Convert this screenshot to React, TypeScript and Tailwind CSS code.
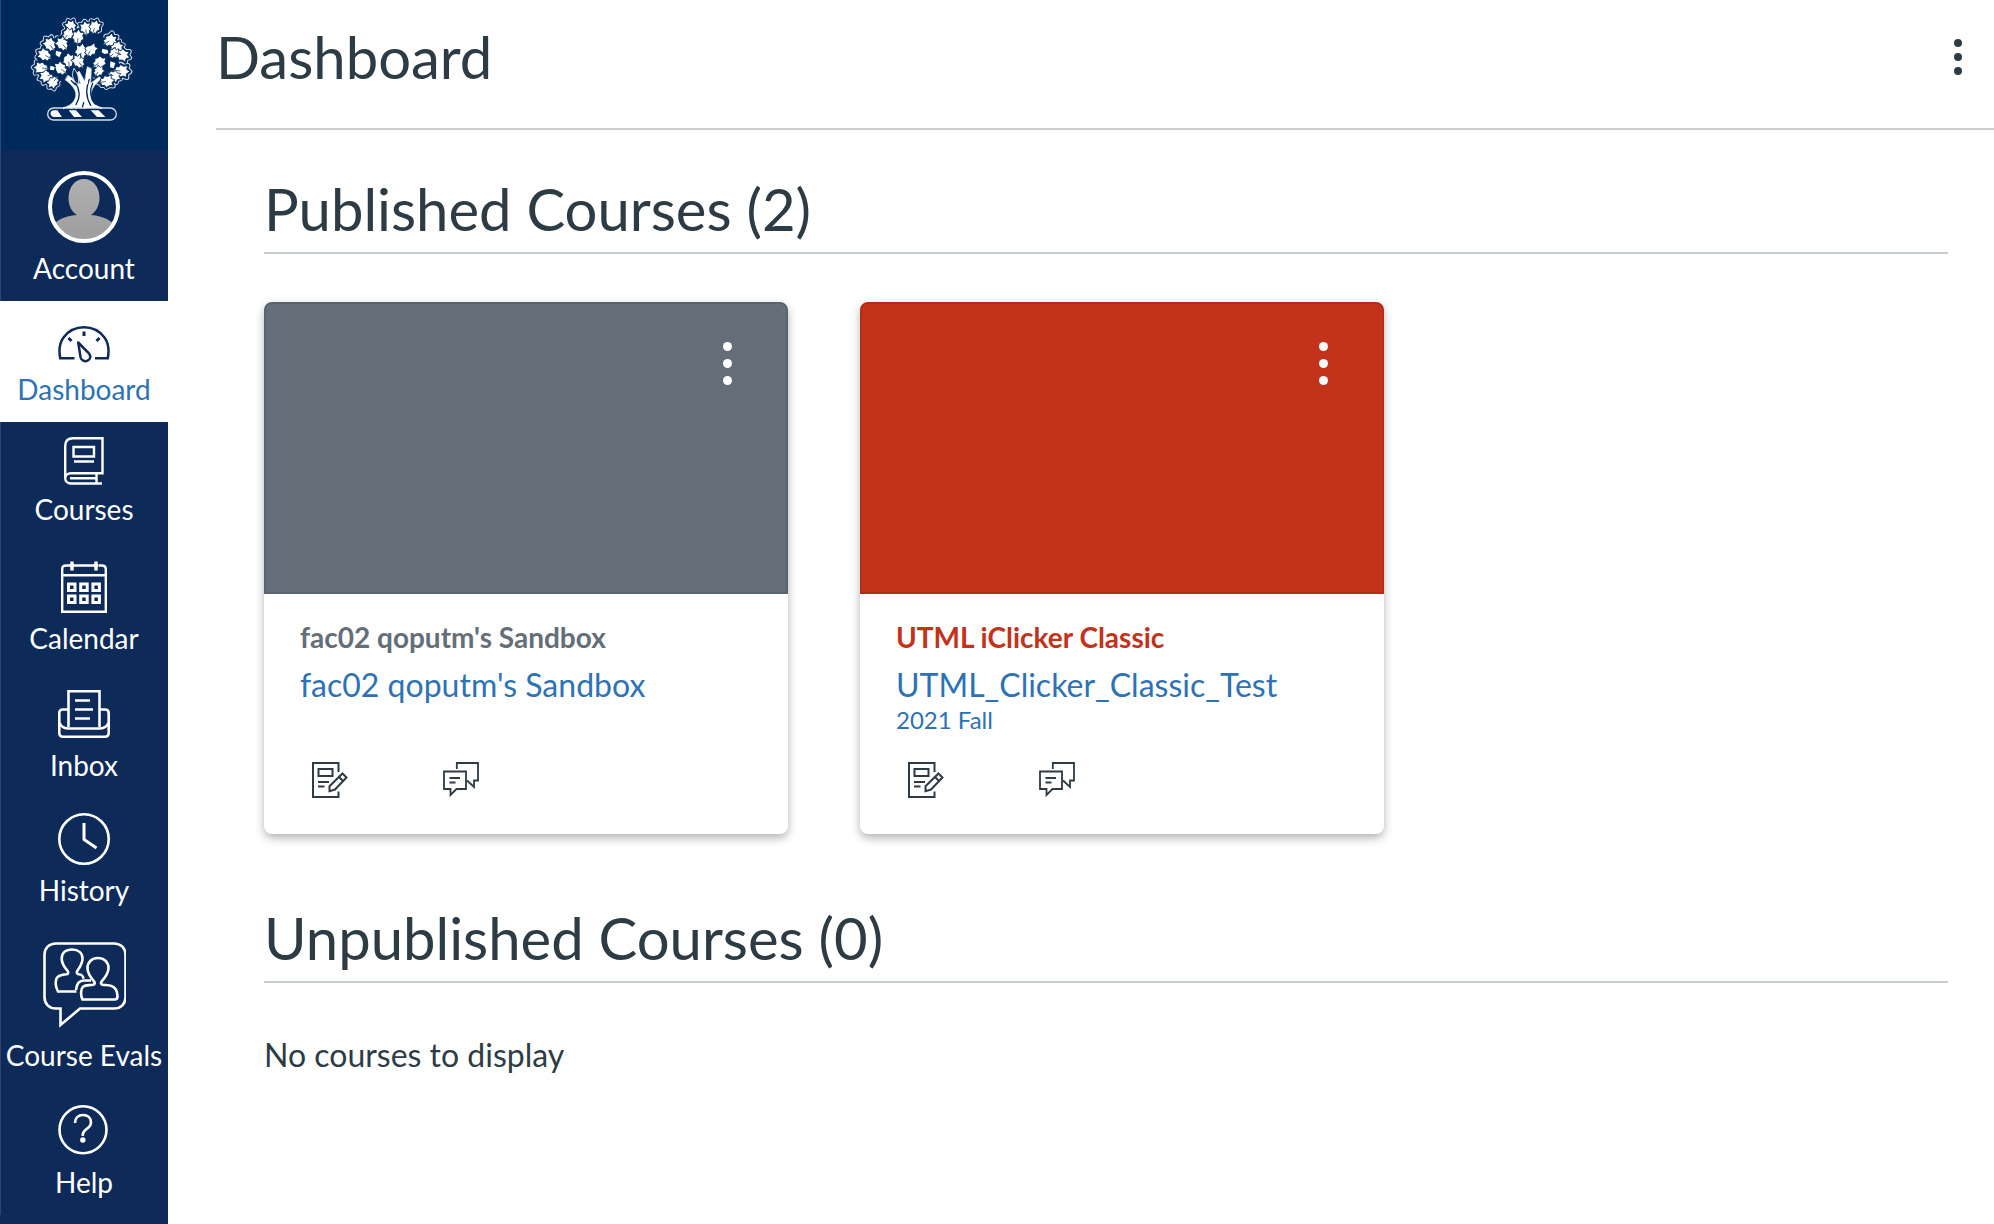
import type { ReactNode } from 'react'

type Course = {
  name: string
  code: string
  term?: string
  band: string
  tone: string
}

const COURSES: Course[] = [
  {
    name: "fac02 qoputm's Sandbox",
    code: "fac02 qoputm's Sandbox",
    band: 'bg-[#646e79] border-[#5a646f]',
    tone: 'text-[#646e79]',
  },
  {
    name: 'UTML iClicker Classic',
    code: 'UTML_Clicker_Classic_Test',
    term: '2021 Fall',
    band: 'bg-[#c3331c] border-[#b02e1a]',
    tone: 'text-[#c3331c]',
  },
]

export default function App() {
  return (
    <div className="flex min-h-screen bg-white font-['Lato',sans-serif] text-[#2d3b45]">
      <Sidebar />
      <main className="min-w-0 flex-1 pl-12">
        <header className="flex items-center justify-between border-b-2 border-[#c7cdd1] pt-6 pr-6 pb-[38px]">
          <h1 className="text-[58px] leading-[66px]">Dashboard</h1>
          <button aria-label="Dashboard options" className="px-2">
            <Dots r={4} gap={14} />
          </button>
        </header>

        <div className="pt-[46px] pr-[46px] pl-12">
          <section>
            <SectionTitle>Published Courses (2)</SectionTitle>
            <div className="mt-12 flex flex-wrap gap-[72px]">
              {COURSES.map(c => <CourseCard key={c.name} course={c} />)}
            </div>
          </section>

          <section className="mt-[71px]">
            <SectionTitle>Unpublished Courses (0)</SectionTitle>
            <p className="mt-[53px] text-[32px] leading-[38px]">No courses to display</p>
          </section>
        </div>
      </main>
    </div>
  )
}

function SectionTitle({ children }: { children: ReactNode }) {
  return (
    <h2 className="border-b-2 border-[#c7cdd1] pb-[10px] text-[58px] leading-[66px]">{children}</h2>
  )
}

function CourseCard({ course }: { course: Course }) {
  return (
    <article className="w-[524px] rounded-lg bg-white shadow-[0_4px_10px_rgba(0,0,0,0.3)]">
      <div className={`flex h-[292px] items-start justify-end rounded-t-lg border-2 pt-[34px] pr-[50px] text-white ${course.band}`}>
        <button aria-label={`Options for ${course.name}`} className="px-1 py-1">
          <Dots r={4.5} gap={17} />
        </button>
      </div>
      <div className="px-9 pt-[26px] pb-9">
        <h3 className={`text-[28px] leading-[34px] font-bold ${course.tone}`}>{course.name}</h3>
        <a href="#course" className="mt-3 block text-[#2d72b5]">
          <span className="block text-[32px] leading-[38px]">{course.code}</span>
          <span className="block h-8 text-[24px] leading-8">{course.term}</span>
        </a>
        <div className="mt-[26px] flex gap-[95px] pl-3">
          <a href="#assignments" aria-label="Assignments"><AssignmentIcon /></a>
          <a href="#discussions" aria-label="Discussions"><DiscussionIcon /></a>
        </div>
      </div>
    </article>
  )
}

function Sidebar() {
  return (
    <nav className="w-[168px] shrink-0 bg-[#0e2a58] text-white">
      <a href="#home" aria-label="Home" className="block border-l border-[#2a4a76] bg-[#002a5c] pb-px">
        <Crest />
      </a>
      <NavItem label="Account"><AccountIcon /></NavItem>
      <NavItem label="Dashboard" active><DashboardIcon /></NavItem>
      <NavItem label="Courses"><CoursesIcon /></NavItem>
      <NavItem label="Calendar"><CalendarIcon /></NavItem>
      <NavItem label="Inbox"><InboxIcon /></NavItem>
      <NavItem label="History"><HistoryIcon /></NavItem>
      <NavItem label="Course Evals"><EvalsIcon /></NavItem>
      <NavItem label="Help"><HelpIcon /></NavItem>
    </nav>
  )
}

function NavItem({ label, active, children }: { label: string; active?: boolean; children: ReactNode }) {
  return (
    <a
      href={`#${label}`}
      aria-current={active ? 'page' : undefined}
      className={`flex flex-col items-center gap-[6px] pt-3 pb-4 ${active ? 'bg-white text-[#0e2a58]' : 'shadow-[inset_1px_0_0_#2c4570]'}`}
    >
      {children}
      <span className={`text-[28px] leading-[34px] whitespace-nowrap ${active ? 'text-[#2d72b5]' : ''}`}>{label}</span>
    </a>
  )
}

function Dots({ r, gap }: { r: number; gap: number }) {
  const h = gap * 2 + r * 2
  return (
    <svg width={r * 2} height={h} viewBox={`0 0 ${r * 2} ${h}`} fill="currentColor">
      <circle cx={r} cy={r} r={r} />
      <circle cx={r} cy={r + gap} r={r} />
      <circle cx={r} cy={r + gap * 2} r={r} />
    </svg>
  )
}

// Oak leaves of the crest: x, y, rotation, scale
const LEAVES = [
  [213, 80, -25, 0.9], [257, 86, -8, 0.95], [284, 82, 18, 0.95], [204, 103, 40, 0.9],
  [234, 112, 5, 1], [150, 134, -35, 1], [187, 132, -40, 1], [134, 165, -60, 1],
  [244, 156, 10, 1.1], [272, 150, 30, 1], [206, 182, -5, 1], [236, 185, -35, 1],
  [124, 204, -85, 1], [182, 206, -50, 1], [140, 228, -110, 1], [160, 246, -140, 0.9],
  [330, 122, 60, 1], [350, 142, 70, 0.9], [366, 165, 110, 1], [342, 160, 50, 0.8],
  [298, 188, 55, 1], [364, 213, 95, 1.05], [296, 214, 40, 0.8], [342, 228, 115, 0.9],
  [320, 244, 80, 1],
]
const LEAF = 'M0 -24 L7 -15 L17 -17 L14 -6 L18 4 L11 8 L10 17 L4 17 L0 25 L-4 17 L-11 17 L-11 8 L-18 4 L-14 -6 L-17 -17 L-7 -15 Z'

function Leaves() {
  return (
    <>
      {LEAVES.map(([x, y, a, s], i) => (
        <path key={i} d={LEAF} transform={`translate(${x} ${y}) rotate(${a}) scale(${s})`} />
      ))}
    </>
  )
}

function Crest() {
  return (
    <svg width="167" height="150" viewBox="3 0 501 450" fill="none" strokeLinejoin="round" strokeLinecap="round">
      {/* contour round the crown */}
      <g stroke="#d5deea" strokeWidth="15"><Leaves /></g>
      <g stroke="#002a5c" strokeWidth="9" fill="#002a5c"><Leaves /></g>
      <path fill="#002a5c" d="M205 95h80l60 40 15 70-50 35-55-15-55 20-70-10-20-60 30-50z" />
      {/* trunk */}
      <path
        fill="#fff"
        stroke="#d5deea"
        strokeWidth="2"
        d="M196 240c26 18 40 40 26 62-7 12-18 16-34 22h120c-18-6-30-12-34-26-6-24 8-44 30-62l-6-6-26 20 2-44-12-6-8 44-16-30-8 4 12 34-38-26z"
      />
      <path stroke="#002a5c" strokeWidth="4" d="M226 248c16 24 14 46 2 66M268 238c-10 28-12 50 4 78M278 250c-10 22-8 44 8 62M247 322l4-14M214 242l12 12" />
      <path stroke="#d5deea" strokeWidth="3" fill="#002a5c" d="M222 206c-8 14-6 34 12 48 4-18 0-36-12-48z" />
      <path stroke="#fff" strokeWidth="7" d="M264 206l-4 44" />
      <g fill="#fff" stroke="#002a5c" strokeWidth="2.500"><Leaves /></g>
      {/* veins */}
      <g stroke="#002a5c" strokeWidth="2">
        {LEAVES.map(([x, y, a], i) => (
          <path key={i} d="M0 4V20" transform={`translate(${x} ${y}) rotate(${a})`} />
        ))}
      </g>
      {/* acorns */}
      <g fill="#002a5c">
        <ellipse cx="215" cy="143" rx="14" ry="12" />
        <ellipse cx="264" cy="130" rx="15" ry="9" />
        <ellipse cx="310" cy="160" rx="13" ry="14" />
        <ellipse cx="328" cy="200" rx="15" ry="14" />
        <ellipse cx="182" cy="166" rx="14" ry="11" />
        <ellipse cx="157" cy="212" rx="12" ry="12" />
      </g>
      <path fill="#fff" d="M307 146l16 4 2 10-12 2-8-6zM331 184l15 5-5 16-11-3zM168 152l17 5-7 15-11-7zM151 197l13 4-2 10-12-2z" />
      {/* wreath */}
      <rect x="143" y="324" width="206" height="36" rx="18" fill="#002a5c" stroke="#d5deea" strokeWidth="4" />
      <path fill="#fff" d="M162 331h10l14 20h-22c-16 0-16-20-2-20zM206 331h22l18 20h-24zM272 331h24l20 20h-25z" />
      <path stroke="#fff" strokeWidth="3" d="M190 326c10-6 20-6 26 0M228 325c4-6 12-6 16 0M252 325c14-6 40-6 52 0" />
    </svg>
  )
}

function AccountIcon() {
  return (
    <svg width="72" height="82" viewBox="0 -8 72 82">
      <clipPath id="avatar"><circle cx="36" cy="36" r="33" /></clipPath>
      <linearGradient id="skin" x1="0" y1="0" x2="0" y2="1">
        <stop offset="0" stopColor="#b0b0b0" />
        <stop offset="1" stopColor="#9c9c9c" />
      </linearGradient>
      <g clipPath="url(#avatar)" fill="url(#skin)">
        <path d="M36 8c9 0 15.500 8 15.500 19 0 8-4 14-8.500 17 14 1 24 7 27 16v14H2V60c3-9 12-15 27-16-5-3-8.500-9-8.500-17C20.500 16 27 8 36 8z" />
      </g>
      <circle cx="36" cy="36" r="34" fill="none" stroke="#fff" strokeWidth="4" />
    </svg>
  )
}

function DashboardIcon() {
  return (
    <svg width="52" height="53" viewBox="0 -13 52 53" fill="none" stroke="currentColor" strokeWidth="2.500">
      <path d="M16.500 32.200H2.200C1 26 .8 18 5.500 11.500 10.500 4.800 18 1.300 26 1.300s15.500 3.500 20.500 10.200c4.700 6.500 4.500 14.500 3.300 20.700H37" />
      <path d="M20.200 16.500l11 11.200c2 2.700 1 5.800-1.600 7-3 1.200-6.200-.2-7-3.200z" strokeLinejoin="round" />
      <path d="M26 5.500v4.500M10.500 12l3 3M41.500 12l-3 3" strokeWidth="3" />
    </svg>
  )
}

function CoursesIcon() {
  return (
    <svg width="40" height="52" viewBox="0 -3 40 52" fill="none" stroke="currentColor" strokeWidth="2.400">
      <path d="M1.200 41V9c0-5 3-7.800 7.800-7.800h29.500v35H7c-3.500 0-5.800 2-5.800 5s2.300 5.300 5.800 5.300h31" />
      <path d="M6 41.300h26M32.500 36.500v10" />
      <path d="M9.500 10h20.500v9.500H9.500zM10 24.500h20" />
    </svg>
  )
}

function CalendarIcon() {
  return (
    <svg width="46" height="61" viewBox="0 -7 46 61" fill="none" stroke="currentColor" strokeWidth="2.400">
      <path d="M8.500 4.500H5c-2.500 0-3.800 1.300-3.800 3.800v42.500h43.600V8.300c0-2.500-1.300-3.800-3.800-3.800h-3.500M13 4.500h20M1.200 14.200h43.600" />
      <path d="M11 .5v9M35 .5v9" strokeWidth="3.400" />
      <path d="M8 4.500h5M32 4.500h5" strokeWidth="2.400" />
      <g strokeWidth="3">
        <path d="M7.500 23h6.500v6.500H7.500zM19.700 23h6.500v6.500h-6.500zM31.900 23h6.500v6.500h-6.500z" />
        <path d="M7.500 35h6.500v6.500H7.500zM19.700 35h6.500v6.500h-6.500zM31.900 35h6.500v6.500h-6.500z" />
      </g>
    </svg>
  )
}

function InboxIcon() {
  return (
    <svg width="52" height="59" viewBox="0 -7 52 59" fill="none" stroke="currentColor" strokeWidth="2.600">
      <path d="M10.500 37V1.300h31V37" />
      <path d="M10.500 19.500H5c-2.500 0-3.700 1.200-3.700 3.700v19.600c0 2.500 1.200 3.900 3.700 3.900h42c2.500 0 3.700-1.400 3.700-3.900V23.200c0-2.500-1.200-3.700-3.700-3.700h-5.500" />
      <path d="M1.500 33c1.500 3.500 5 5.500 9.500 5.500h30c4.500 0 8-2 9.500-5.500" />
      <path d="M17 10.500h15M17 19.500h18M17 28.500h15" />
    </svg>
  )
}

function HistoryIcon() {
  return (
    <svg width="52" height="57" viewBox="0 -3 52 57" fill="none" stroke="currentColor" strokeWidth="2.600">
      <circle cx="26" cy="26" r="24.700" />
      <path d="M26 10v16.500l12.500 8.500" strokeWidth="3" />
    </svg>
  )
}

function EvalsIcon() {
  return (
    <svg width="84" height="97" viewBox="-1 -7 84 97" fill="none" stroke="currentColor" strokeWidth="2.600">
      <path d="M13 1.500h58c7 0 11.500 4.500 11.500 11.500v42c0 7-4.500 11.500-11.500 11.500H37L17.500 83V66.500H13C6 66.500 1.500 62 1.500 55V13C1.500 6 6 1.500 13 1.500z" />
      <path d="M33.500 49.500H15c-2-4-3-9-1.500-13 1.500-3.500 6-4 10-4.300 2-.2 2.200-2 .8-3.700-4-4.500-5.600-8-5.600-12 0-5.500 4-9 10.300-9s10.500 3.500 10.500 9c0 4-1.700 7.500-5 12-1.200 1.700-.8 3.500 1 3.700 3.500.3 4.500 1.300 5 4.500" />
      <path d="M33 48c.5-6 3-9.500 8-9.500h7" />
      <path d="M38.500 57.500h33c2 0 3-1 3-3 0-6-2-9-6-10.500-3-1-6-.8-9-1.300-1.800-.3-2-1.700-.8-3.400 4-4.500 6.800-8.300 6.800-13.300 0-6-4.500-10-10.500-10s-10.500 4-10.500 10c0 5 2.500 8.800 6.500 13.300 1.200 1.700 1 3-.8 3.400-4 .8-7.700 0-10.200 2-2.500 2.300-2.500 8.800-.5 12.800z" />
    </svg>
  )
}

function HelpIcon() {
  return (
    <svg width="52" height="59" viewBox="0 -5 52 59" fill="none" stroke="currentColor" strokeWidth="2.600">
      <circle cx="25" cy="24.700" r="23.500" />
      <path d="M17 18c0-5 3.300-8 8-8s8 3 8 7.500c0 6.500-8.200 6.500-8.200 12V31" />
      <circle cx="24.800" cy="35" r="2.700" fill="currentColor" stroke="none" />
    </svg>
  )
}

function AssignmentIcon() {
  return (
    <svg width="36" height="36" viewBox="0 0 36 36" fill="none" stroke="currentColor" strokeWidth="2">
      <path d="M26.500 10V1H1v34h25.500v-5.500" />
      <path d="M6.500 7h14v7h-14z" />
      <path d="M6 20h11M6 24.500h6.500" />
      <path d="M30.500 11.500l4 4L23 27.500l-5.500 1.700v-5zM27 15l4 4" />
    </svg>
  )
}

function DiscussionIcon() {
  return (
    <svg width="36" height="36" viewBox="0 0 36 36" fill="none" stroke="currentColor" strokeWidth="1.800">
      <path d="M13.800 7V1H35v17.500h-4V25l-7-6.500" />
      <path d="M1 9.500h22v17.500h-9.500L7.500 33v-6H1z" />
      <path d="M6.500 16h10.500M6.500 20.500h6" />
    </svg>
  )
}
